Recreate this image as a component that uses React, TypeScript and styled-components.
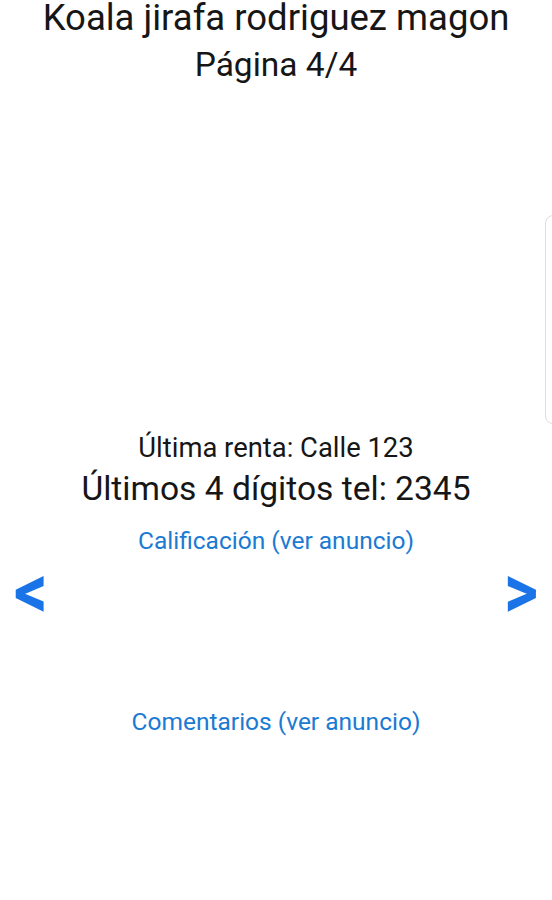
import React from "react";
import styled, {createGlobalStyle} from "styled-components";

const GlobalStyle = createGlobalStyle`
  html, body {
    margin: 0;
    padding: 0;
    background: #ffffff;
  }
  body {
    font-family: Roboto, "Noto Sans", sans-serif;
    color: #161616;
  }
`;

const Screen = styled.div`
  position: relative;
  width: 552px;
  height: 900px;
  overflow: hidden;
  display: flex;
  flex-direction: column;
  align-items: center;
`;

const Header = styled.header`
  display: flex;
  flex-direction: column;
  align-items: center;
  padding-top: 2px;
`;

const Title = styled.h1`
  margin: 0;
  font-weight: 400;
  font-size: 36.5px;
  line-height: 31px;
  white-space: nowrap;
`;

const PageNumber = styled.div`
  font-size: 33.5px;
  line-height: 40px;
  margin-top: 12px;
`;

const Details = styled.section`
  margin-top: 347px;
  display: flex;
  flex-direction: column;
  align-items: center;
`;

const Line = styled.div<{ $size: number; $height: number; $top?: number }>`
  font-size: ${p => p.$size}px;
  line-height: ${p => p.$height}px;
  margin-top: ${p => p.$top ?? 0}px;
  white-space: nowrap;
`;

const Link = styled.a<{ $top?: number }>`
  display: block;
  color: #1b7ad3;
  font-size: 24.5px;
  line-height: 30px;
  text-decoration: none;
  margin-top: ${p => p.$top ?? 0}px;
  cursor: pointer;
`;

const NavRow = styled.div`
  width: 100%;
  height: 80px;
  display: flex;
  justify-content: space-between;
  align-items: center;
  padding: 0 14px 0 14px;
  box-sizing: border-box;
`;

const Arrow = styled.button`
  border: none;
  background: none;
  padding: 0;
  color: #1a74e7;
  font-family: Roboto, sans-serif;
  font-weight: 700;
  font-size: 66px;
  line-height: 80px;
  height: 80px;
  transform: translateY(-4px) scaleY(1.14);
  cursor: pointer;
`;

const EdgeHandle = styled.div`
  position: absolute;
  top: 215px;
  left: 545px;
  width: 20px;
  height: 207px;
  border: 1px solid #dedede;
  border-radius: 8px;
  background: #ffffff;
`;

export default function App() {
    return (
        <Screen>
            <GlobalStyle/>
            <Header>
                <Title>Koala jirafa rodriguez magon</Title>
                <PageNumber>Página 4/4</PageNumber>
            </Header>
            <Details>
                <Line $size={27.4} $height={32}>Última renta: Calle 123</Line>
                <Line $size={33.6} $height={40} $top={5}>Últimos 4 dígitos tel: 2345</Line>
                <Link $top={17}>Calificación (ver anuncio)</Link>
            </Details>
            <NavRow>
                <Arrow aria-label="anterior">&lt;</Arrow>
                <Arrow aria-label="siguiente">&gt;</Arrow>
            </NavRow>
            <Link $top={71}>Comentarios (ver anuncio)</Link>
            <EdgeHandle/>
        </Screen>
    );
}
